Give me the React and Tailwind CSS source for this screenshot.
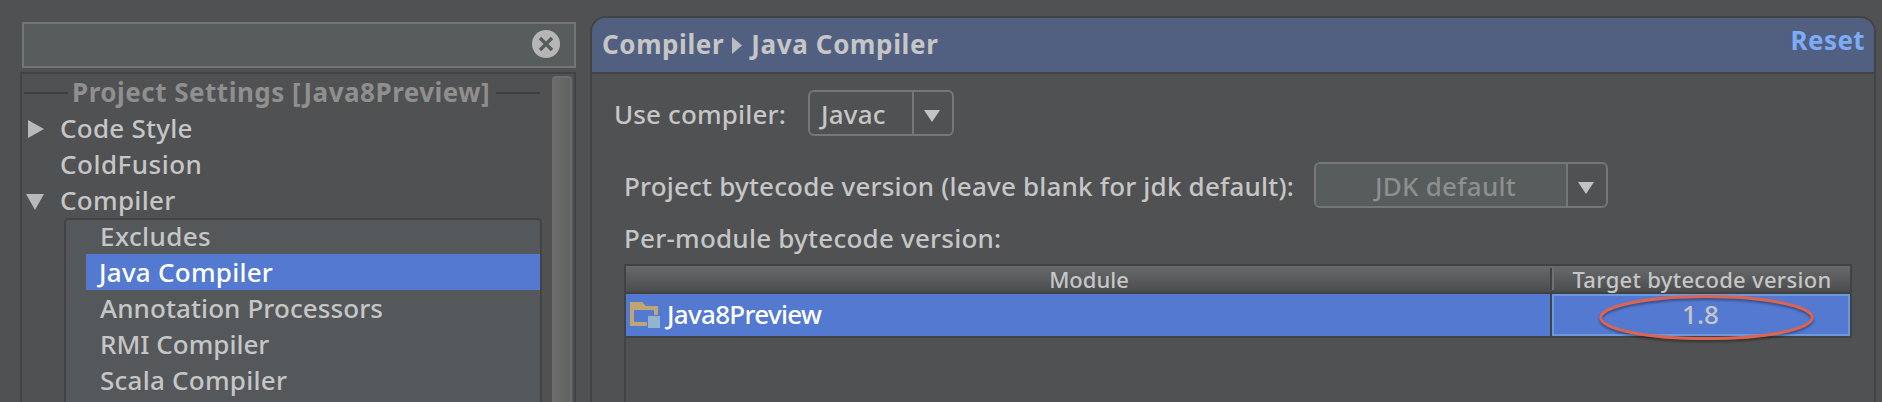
function Combo({ children, fieldClass }) {
  return (
    <div className="flex h-[46px] rounded-[6px] border-2 border-[#757677] overflow-hidden">
      <div className={"h-[42px] leading-[45px] border-r-2 border-[#757677] " + fieldClass}>{children}</div>
      <div className="w-[38px] pl-[9px] pt-[18px]">
        <svg className="block" width="18" height="12" viewBox="0 0 18 12"><path d="M1 0H17L9 12Z" fill="#c3c3c3" /></svg>
      </div>
    </div>
  );
}

function SubItem({ children, tight, selected }) {
  const tone = selected ? "bg-[#5479d1] text-white pl-[13px]" : "pl-3.5";
  return <div className={"ml-5 leading-9 " + (tight ? "h-[34px] -mt-0.5 mb-0.5 " : "h-9 ") + tone}>{children}</div>;
}

export default function App() {
  return (
    <div className="flex w-[1882px] h-[402px] overflow-hidden bg-[#505152] text-[#c6c6c6] text-[26px] font-medium whitespace-nowrap font-['Noto_Sans',sans-serif]">
      <aside className="w-[556px] ml-5 pt-[22px] shrink-0">
        <div className="ml-0.5 h-[46px] border-2 border-[#747676] bg-[#575c5d] flex items-start justify-end pt-1.5 pr-3.5">
          <svg width="28" height="28" viewBox="0 0 28 28">
            <circle cx="14" cy="14" r="14" fill="#b6b6b6" />
            <path d="M8 8L20 20M20 8L8 20" stroke="#575c5d" strokeWidth="3.4" />
          </svg>
        </div>
        <div className="mt-1 h-[340px] border-2 border-[#434345] flex justify-between">
          <div className="w-[520px]">
            <div className="h-9 leading-9 flex items-center px-0.5 text-[#8f8f8f] font-bold">
              <span className="w-11 h-0.5 mt-0.5 bg-[#3e3f40]" />
              <span className="w-[428px] pl-1 tracking-[0.5px]">Project Settings [Java8Preview]</span>
              <span className="w-11 h-0.5 mt-0.5 bg-[#3e3f40]" />
            </div>
            <div className="h-9 leading-9 flex">
              <svg className="ml-1.5 mt-2.5 mr-4" width="16" height="18" viewBox="0 0 16 18"><path d="M0 0L16 9L0 18Z" fill="#b9b9b9" /></svg>
              <span className="tracking-[0.25px]">Code Style</span>
            </div>
            <div className="h-9 leading-9 pl-[38px] tracking-[0.5px]">ColdFusion</div>
            <div className="h-9 leading-9 flex">
              <svg className="ml-1 mt-3 mr-4" width="18" height="16" viewBox="0 0 18 16"><path d="M0 0H18L9 16Z" fill="#b9b9b9" /></svg>
              <span className="tracking-[0.3px]">Compiler</span>
            </div>
            <div className="ml-[42px] w-[478px] h-[186px] rounded-t-[5px] border-2 border-[#434345] bg-[#54585a]">
              <SubItem tight><span className="tracking-[0.4px]">Excludes</span></SubItem>
              <SubItem selected><span className="tracking-[0.25px]">Java Compiler</span></SubItem>
              <SubItem><span className="tracking-[0.1px]">Annotation Processors</span></SubItem>
              <SubItem>RMI Compiler</SubItem>
              <SubItem><span className="tracking-[0.25px]">Scala Compiler</span></SubItem>
            </div>
          </div>
          <div className="w-5 mt-0.5 mr-0.5 rounded-t-[4px] border-2 border-b-0 border-[#6b6c6c] bg-linear-to-r from-[#6c6c6c] to-[#606161]" />
        </div>
      </aside>
      <main className="flex flex-col ml-3.5 mt-4 w-[1286px] h-[400px] shrink-0 border-2 border-[#434345] rounded-t-[16px] overflow-hidden">
        <header className="h-14 shrink-0 bg-[#516081] border-b-2 border-[#434345] flex justify-between pl-2.5 pr-[9px] font-bold">
          <div className="flex leading-9 pt-2">
            <span className="tracking-[0.6px]">Compiler</span>
            <svg className="ml-2 mr-[9px] mt-[11px]" width="10" height="17" viewBox="0 0 10 17"><path d="M0 0L10 8.5L0 17Z" fill="#b9bcc2" /></svg>
            <span className="tracking-[0.65px]">Java Compiler</span>
          </div>
          <span className="leading-9 pt-1 text-[#7dabf6] tracking-[0.4px]">Reset</span>
        </header>
        <section className="flex pt-4 pl-[22px]">
          <div className="w-[194px] h-[46px] leading-[49px] tracking-[0.15px]">Use compiler:</div>
          <Combo fieldClass="w-[104px] pl-[11px] tracking-[0.2px]">Javac</Combo>
        </section>
        <section className="flex pt-[26px] pl-8">
          <div className="w-[690px] h-[46px] leading-[49px] tracking-[0.19px]">Project bytecode version (leave blank for jdk default):</div>
          <Combo fieldClass="w-[252px] bg-[#575c5d] text-[#8d8f8f] pl-[59px] tracking-[0.25px]">JDK default</Combo>
        </section>
        <div className="pl-8 pt-3 h-14 leading-9 tracking-[0.23px]">Per-module bytecode version:</div>
        <div className="ml-8 w-[1228px] shrink-0 border-2 border-[#414243] relative">
          <div className="flex h-7 border-b-2 border-[#414243] bg-linear-to-b from-[#676a6c] to-[#4b4c4d] text-[22px] leading-[27px]">
            <div className="w-[924px] pl-0.5 text-center">Module</div>
            <div className="w-1 h-[22px] mt-0.5 border-l-2 border-[#414243] bg-[#6f7172]" />
            <div className="w-[296px] text-center tracking-[0.3px]">Target bytecode version</div>
          </div>
          <div className="flex h-[42px] bg-[#5479d1]">
            <div className="w-[926px] border-r-2 border-[#414243] flex pl-1 text-white leading-10">
              <svg className="mt-2 mr-[7px]" width="30" height="26" viewBox="0 0 30 26">
                <path fillRule="evenodd" d="M0 0H12L16 4H28V13H17V24H0ZM4 8V20H17V13H24V8Z" fill="#c0a472" />
                <path d="M18 14H30V26H18Z" fill="#92b4cf" />
              </svg>
              <span className="tracking-[-0.7px]">Java8Preview</span>
            </div>
            <div className="w-[298px] border-2 border-[#6c99da] text-center leading-9 pr-px">1.8</div>
          </div>
          <svg className="absolute left-[969px] top-6 drop-shadow-[0_2px_1px_rgba(0,0,0,0.35)]" width="222" height="54" viewBox="0 0 222 54">
            <ellipse cx="111.5" cy="27.6" rx="105.8" ry="21" fill="none" stroke="#dc6450" strokeWidth="3" />
          </svg>
        </div>
        <div className="ml-8 grow border-l-2 border-[#434345]" />
      </main>
    </div>
  );
}
